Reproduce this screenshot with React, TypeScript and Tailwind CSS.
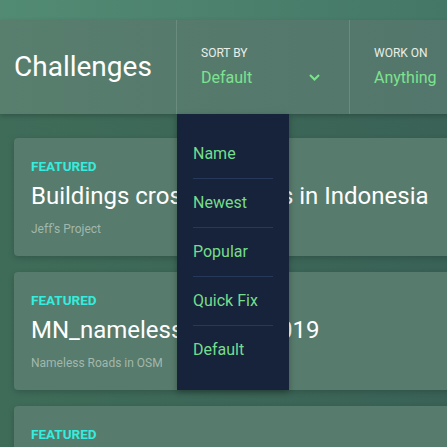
import React from "react";

const font = { fontFamily: "Roboto, 'Noto Sans', sans-serif" };

function Card({ title, sub }: { title: string; sub: string }) {
  return (
    <div className="rounded-[4px] bg-[#577b6c] pl-[17px] pt-[20px] pb-[20px] shadow-[0_2px_6px_rgba(0,0,0,0.18)]">
      <div className="text-[13.5px] leading-[16px] font-bold text-[#36ecdc]">FEATURED</div>
      <div className="mt-[7px] text-[24px] leading-[30px] text-white whitespace-nowrap">{title}</div>
      <div className="mt-[11px] text-[12px] leading-[14px] text-[#a2b8ad]">{sub}</div>
    </div>
  );
}

export default function App() {
  const items = ["Name", "Newest", "Popular", "Quick Fix", "Default"];
  return (
    <div style={font} className="relative w-[447px] h-[447px] overflow-hidden bg-gradient-to-r from-[#3f6c59] to-[#3a6257]">
      <div className="h-[20px] bg-gradient-to-r from-[#528b74] to-[#457767]" />
      <div className="relative z-10 flex h-[94px] w-[640px] bg-gradient-to-r from-[#587e6e] to-[#50736a] shadow-[0_2px_5px_rgba(0,0,0,0.2)]">
        <div className="flex w-[177px] items-center pl-[14px] border-r border-[#6a8c7f]">
          <span className="text-[28px] leading-[34px] text-white">Challenges</span>
        </div>
        <div className="relative flex w-[173px] flex-col justify-center pl-[24px] pr-[29px] border-r border-[#6a8c7f]">
          <div className="text-[12px] leading-[13px] text-[#e8efe9]">SORT BY</div>
          <div className="mt-[8px] flex items-center justify-between text-[16px] leading-[20px] text-[#7ee38f]">
            <span>Default</span>
            <svg width="11" height="7" viewBox="0 0 11 7">
              <polyline points="1,1 5.5,5.5 10,1" fill="none" stroke="#7ee38f" strokeWidth="2" />
            </svg>
          </div>
          <div className="absolute left-0 top-[94px] w-[112px] bg-[#17233a] pt-[16px] pb-[15px] px-[16px] shadow-[0_2px_6px_rgba(0,0,0,0.3)]">
            {items.map((it, i) => (
              <div
                key={it}
                className={`h-[49px] text-[16px] leading-[48px] text-[#74dd8c] ${i < items.length - 1 ? "border-b border-[#26395a]" : ""}`}
              >
                {it}
              </div>
            ))}
          </div>
        </div>
        <div className="flex flex-col justify-center pl-[24px]">
          <div className="text-[12px] leading-[13px] text-[#e8efe9]">WORK ON</div>
          <div className="mt-[8px] text-[16px] leading-[20px] text-[#7ee38f]">Anything</div>
        </div>
      </div>
      <div className="flex w-[700px] flex-col gap-[16px] pl-[14px] pt-[24px]">
        <Card title="Buildings crossing roads in Indonesia" sub="Jeff's Project" />
        <Card title="MN_nameless_roads_2019" sub="Nameless Roads in OSM" />
        <Card title="Something" sub="Other" />
      </div>
    </div>
  );
}
